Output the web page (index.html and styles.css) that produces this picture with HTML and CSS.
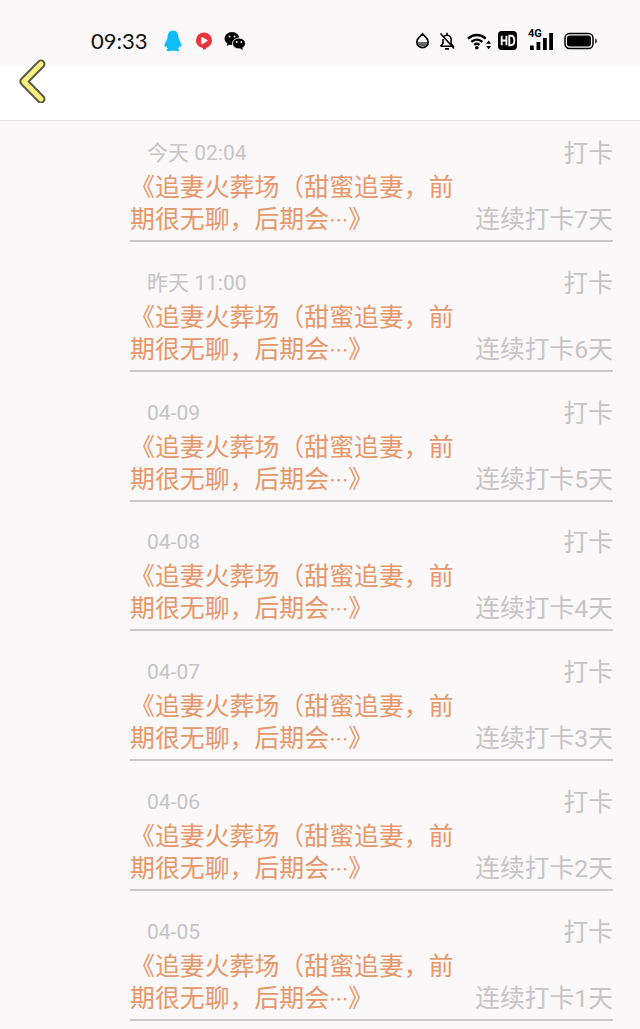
FILE: index.html
```html
<!DOCTYPE html>
<html lang="zh">
<head>
<meta charset="utf-8">
<title>打卡</title>
<link rel="stylesheet" href="styles.css">
</head>
<body>
<div class="status">
  <span class="time">09:33</span>
  <svg class="ic qq" viewBox="0 0 20 22"><path fill="#10bdf4" d="M10 .5C6.200.5 4.600 3.500 4.600 7c0 1.200-.3 2-1 3.200C2.300 12.500 1 15 1.600 16.800c.5.800 1.300-.2 1.900-1 .2 1.200.8 2.200 1.500 3-1 .4-1.800.9-1.500 1.700.3.700 2.500.8 4 .6.700-.2 1.400-.3 2.500-.3s1.800.1 2.500.3c1.500.2 3.700.1 4-.6.300-.8-.5-1.300-1.500-1.700.7-.8 1.300-1.800 1.500-3 .6.800 1.400 1.800 1.900 1 .6-1.800-.7-4.300-2-6.600-.7-1.200-1-2-1-3.200C15.400 3.500 13.800.5 10 .5z"/></svg>
  <svg class="ic vid" viewBox="0 0 20 20"><path fill="#e8343a" d="M10 1.500a8 8 0 0 1 8 8c0 3.700-3 6.200-5.500 7.200-.6 1-1.500 2-2.500 2-.8 0-1-.9-1.100-1.800C5 16.300 2 13.500 2 9.500a8 8 0 0 1 8-8z"/><path fill="#fff" stroke="#fff" stroke-width="1.500" stroke-linejoin="round" d="M8 6.800l4.800 2.900L8 12.500z"/></svg>
  <svg class="ic wx" viewBox="0 0 22 20"><ellipse cx="8" cy="7.500" rx="7.500" ry="6.500" fill="#000"/><path d="M3.500 11.500l-.7 3.500 3.700-2z" fill="#000"/><ellipse cx="15" cy="12.500" rx="6.500" ry="5.500" fill="#000" stroke="#faf8f9" stroke-width="1"/><path d="M18 16.500l1 2.500-3-1.500z" fill="#000"/><circle cx="5.500" cy="5.500" r="1" fill="#faf8f9"/><circle cx="10.500" cy="5.500" r="1" fill="#faf8f9"/><circle cx="12.800" cy="11" r=".9" fill="#faf8f9"/><circle cx="17.300" cy="11" r=".9" fill="#faf8f9"/></svg>
  <span class="spacer"></span>
  <svg class="ic drop" viewBox="0 0 16 18"><path fill="none" stroke="#000" stroke-width="1.900" d="M8 1.300l4.200 4.500a6 6 0 1 1-8.400 0z"/><path fill="#666" d="M2.600 10h10.800a5.500 5.500 0 0 1-10.800 0z"/></svg>
  <svg class="ic bell" viewBox="0 0 18 18"><path fill="none" stroke="#000" stroke-width="1.600" d="M2.500 14.300h12.500l-1.900-2.800V7.500C13.100 5 11.500 3.300 9 3.300 7.600 3.300 6.500 3.800 5.800 4.700M5 7v4.500l-2.500 2.800M7 16.900h4M2.500 1.500l13.500 15M9 .8v2.500"/></svg>
  <svg class="ic wifi" viewBox="0 0 26 18"><path fill="none" stroke="#000" stroke-width="2.400" d="M1 6.500c5.500-5 13-5 18.500 0M4.500 10c3.500-3.200 8-3.200 11.500 0M7.500 13c1.800-1.500 3.800-1.500 5.500 0"/><circle cx="10.200" cy="16" r="1.900"/><path d="M22.500 8.500l-2.600 3.300h5.200zM22.500 17.500l-2.600-3.300h5.200z"/></svg>
  <svg class="ic hd" viewBox="0 0 18 18"><rect width="18" height="18" rx="3.500"/><path fill="none" stroke="#faf8f9" stroke-width="1.800" d="M3.500 4.500v9M8 4.500v9M3.500 9H8M10.700 4.500v9h1.500c2.500 0 3.300-1.800 3.300-4.500s-.8-4.500-3.300-4.500z"/></svg>
  <span class="net"><span class="g4">4G</span><svg class="bars" viewBox="0 0 23 17"><rect x="0" y="12.500" width="3.800" height="4.500"/><rect x="6.500" y="9" width="3.800" height="8"/><rect x="13" y="5" width="3.800" height="12"/><rect x="19.200" y="0" width="3.800" height="17"/></svg></span>
  <svg class="ic batt" viewBox="0 0 34 18"><rect x="1" y="1.500" width="28" height="15" rx="4.500" fill="none" stroke="#000" stroke-width="1.500"/><rect x="3" y="3.500" width="24" height="11" rx="3"/><path d="M31 6.500c1.300.3 2 1.200 2 2.500s-.7 2.200-2 2.500z" fill="#444"/></svg>
</div>
<header class="nav">
  <svg class="back" viewBox="0 0 30 44"><path d="M24 5L6.800 22.500 24 40" fill="none" stroke="#5d5a4c" stroke-width="9" stroke-linecap="round" stroke-linejoin="round"/><path d="M24 5L6.800 22.500 24 40" fill="none" stroke="#f8f27e" stroke-width="5" stroke-linecap="round" stroke-linejoin="round"/></svg>
</header>
<main class="list">
  <section class="row"><div class="top"><span class="date">今天 02:04</span><span class="tag">打卡</span></div><div class="bottom"><p class="title"><span class="line">《追妻火葬场（甜蜜追妻，前</span><span class="line">期很无聊，后期会<span class="ell">⋯</span>》</span></p><span class="streak">连续打卡7天</span></div></section>
  <section class="row"><div class="top"><span class="date">昨天 11:00</span><span class="tag">打卡</span></div><div class="bottom"><p class="title"><span class="line">《追妻火葬场（甜蜜追妻，前</span><span class="line">期很无聊，后期会<span class="ell">⋯</span>》</span></p><span class="streak">连续打卡6天</span></div></section>
  <section class="row"><div class="top"><span class="date">04-09</span><span class="tag">打卡</span></div><div class="bottom"><p class="title"><span class="line">《追妻火葬场（甜蜜追妻，前</span><span class="line">期很无聊，后期会<span class="ell">⋯</span>》</span></p><span class="streak">连续打卡5天</span></div></section>
  <section class="row"><div class="top"><span class="date">04-08</span><span class="tag">打卡</span></div><div class="bottom"><p class="title"><span class="line">《追妻火葬场（甜蜜追妻，前</span><span class="line">期很无聊，后期会<span class="ell">⋯</span>》</span></p><span class="streak">连续打卡4天</span></div></section>
  <section class="row"><div class="top"><span class="date">04-07</span><span class="tag">打卡</span></div><div class="bottom"><p class="title"><span class="line">《追妻火葬场（甜蜜追妻，前</span><span class="line">期很无聊，后期会<span class="ell">⋯</span>》</span></p><span class="streak">连续打卡3天</span></div></section>
  <section class="row"><div class="top"><span class="date">04-06</span><span class="tag">打卡</span></div><div class="bottom"><p class="title"><span class="line">《追妻火葬场（甜蜜追妻，前</span><span class="line">期很无聊，后期会<span class="ell">⋯</span>》</span></p><span class="streak">连续打卡2天</span></div></section>
  <section class="row"><div class="top"><span class="date">04-05</span><span class="tag">打卡</span></div><div class="bottom"><p class="title"><span class="line">《追妻火葬场（甜蜜追妻，前</span><span class="line">期很无聊，后期会<span class="ell">⋯</span>》</span></p><span class="streak">连续打卡1天</span></div></section>
</main>
</body>
</html>
```
FILE: styles.css
```css
* { box-sizing: border-box; }
html, body { margin: 0; height: 100%; overflow: hidden; }
body { background: #faf8f9; font-family: "Roboto", "Noto Sans CJK SC", sans-serif; width: 640px; height: 1029px; }
.status { height: 65px; padding: 16px 42px 0 91px; display: flex; align-items: center; }
.time { font-family: "Lato", sans-serif; font-size: 22px; color: #111; width: 72px; }
.spacer { flex: 1; }
.ic { display: block; flex: none; fill: #000; }
.qq { width: 20px; height: 22px; }
.vid { width: 20px; height: 20px; margin-left: 11px; }
.wx { width: 22px; height: 20px; margin-left: 10px; }
.drop { width: 15px; height: 18px; }
.bell { width: 18px; height: 18px; margin-left: 8px; }
.wifi { width: 25px; height: 18px; margin-left: 11px; }
.hd { width: 19px; height: 19px; margin-left: 6px; }
.net { position: relative; width: 24px; height: 19px; margin-left: 12px; display: block; }
.g4 { position: absolute; left: -1px; top: -3px; font: 700 11px/12px "Roboto", sans-serif; color: #000; }
.bars { position: absolute; left: 1px; top: 2px; width: 23px; height: 17px; fill: #000; }
.batt { width: 34px; height: 18px; margin-left: 11px; }
.nav { height: 56px; background: #fff; border-bottom: 1px solid #e6e4e5; position: relative; }
.back { position: absolute; left: 17px; top: -6px; width: 30px; height: 44px; }
.list { padding: 0 27px 0 130px; }
.row { height: 121px; border-bottom: 2px solid #c9c7c8; margin-bottom: 8.8px; padding-top: 15px; }
.top { display: flex; justify-content: space-between; align-items: flex-start; height: 34px; margin-bottom: 2px; }
.date { font-size: 21px; line-height: 34px; color: #c6c4c5; padding-left: 17px; }
.tag { font-size: 24.75px; line-height: 36px; color: #c6c4c5; }
.bottom { display: flex; justify-content: space-between; align-items: flex-end; }
.title { margin: 0; width: 326px; font-size: 24.9px; line-height: 32px; color: #e8976b; }
.line { display: block; white-space: nowrap; }
.ell { font-family: "Noto Sans CJK SC", sans-serif; font-size: 19px; line-height: 1; }
.streak { font-size: 24.75px; line-height: 32px; color: #c6c4c5; }
```
